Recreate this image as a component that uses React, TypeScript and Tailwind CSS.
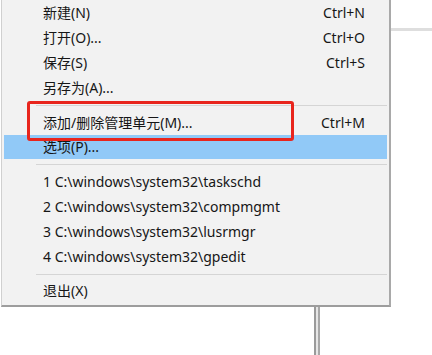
import React from "react";

type Item = { label: string; shortcut?: string; h: number; active?: boolean };

const Row = ({ label, shortcut, h, active }: Item) => (
  <div
    className={`flex items-center justify-between pl-[39px] pr-[22px] mx-[2px] ${active ? "bg-[#91c9f7]" : ""}`}
    style={{ height: h }}
  >
    <span>{label}</span>
    {shortcut && <span>{shortcut}</span>}
  </div>
);

const Sep = ({ h }: { h: number }) => (
  <div className="flex items-center pl-[34px] pr-[2px]" style={{ height: h }}>
    <div className="h-px w-full bg-[#d5d5d5]" />
  </div>
);

export default function App() {
  return (
    <div
      className="relative w-[432px] h-[355px] overflow-hidden bg-white text-[#161616]"
      style={{ fontFamily: '"Noto Sans", "Noto Sans CJK SC", sans-serif' }}
    >
      {/* background window lines */}
      <div className="absolute left-[390px] top-[28px] right-0 h-[3px] bg-[#dedede]" />
      <div className="absolute left-[314px] top-[300px] bottom-0 w-[6px] flex">
        <div className="w-[2px] bg-[#9a9a9a]" />
        <div className="w-[2px] bg-[#e6e6e6]" />
        <div className="w-[2px] bg-[#a8a8a8]" />
      </div>

      {/* menu */}
      <div className="absolute left-[1px] top-0 w-[390px] h-[307px] bg-[#f2f2f2] border-l border-r-2 border-b-2 border-l-[#d0d0d0] border-r-[#a9a9a9] border-b-[#9d9d9d] text-[14px] leading-none">
        <Row label="新建(N)" shortcut="Ctrl+N" h={25} />
        <Row label="打开(O)..." shortcut="Ctrl+O" h={25} />
        <Row label="保存(S)" shortcut="Ctrl+S" h={25} />
        <Row label="另存为(A)..." h={25} />
        <Sep h={11} />
        <Row label="添加/删除管理单元(M)..." shortcut="Ctrl+M" h={24} />
        <Row label="选项(P)..." h={24} active />
        <Sep h={10} />
        <Row label="1 C:\windows\system32\taskschd" h={25} />
        <Row label="2 C:\windows\system32\compmgmt" h={25} />
        <Row label="3 C:\windows\system32\lusrmgr" h={25} />
        <Row label="4 C:\windows\system32\gpedit" h={25} />
        <Sep h={10} />
        <Row label="退出(X)" h={24} />
      </div>

      {/* red annotation box */}
      <div className="absolute left-[27px] top-[101px] w-[267px] h-[40px] border-[3px] border-[#e8251d] rounded-[3px]" />
    </div>
  );
}
